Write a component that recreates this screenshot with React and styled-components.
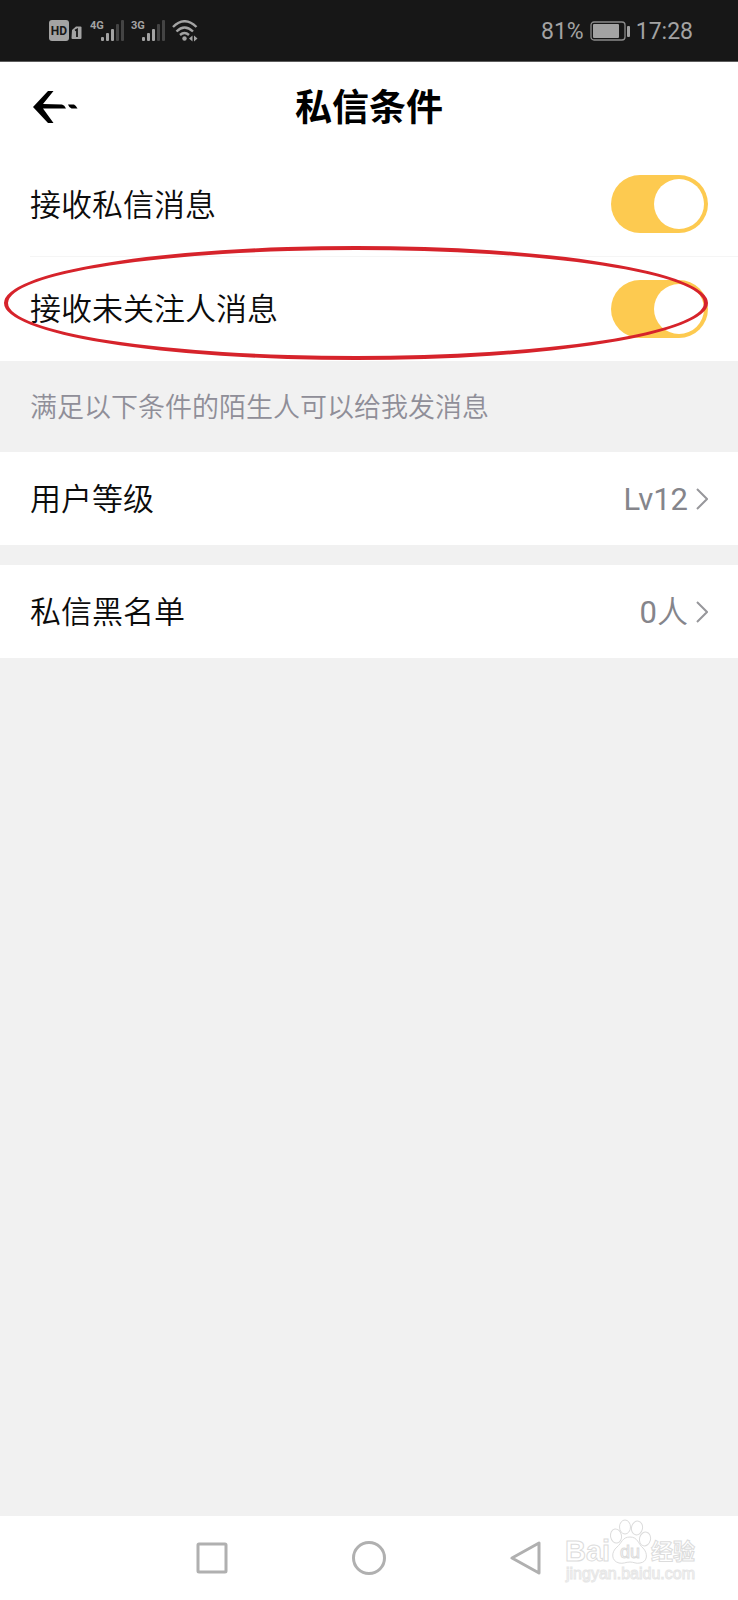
import { useState } from 'react';
import styled, { createGlobalStyle } from 'styled-components';

const GlobalStyle = createGlobalStyle`
  * {
    box-sizing: border-box;
  }
  body {
    margin: 0;
    background: #f1f1f1;
    color: #0c0c0c;
    font-family: Roboto, 'Noto Sans CJK SC', sans-serif;
    font-weight: 350;
  }
  button {
    padding: 0;
    border: none;
    background: none;
    color: inherit;
    font: inherit;
    cursor: pointer;
  }
`;

const Page = styled.div`
  display: flex;
  flex-direction: column;
  min-height: 100vh;
`;

const StatusBar = styled.div`
  display: flex;
  align-items: center;
  justify-content: space-between;
  height: 62px;
  padding: 0 45px 0 48px;
  border-bottom: 1px solid #5c5c5c;
  background: #171717;
  color: #a3a3a3;
`;

const StatusGroup = styled.div`
  display: flex;
  align-items: center;
  gap: 6px;
  font-size: 23px;
  font-weight: 400;
  line-height: 28px;
`;

const StatusText = styled.span`
  padding-top: 2px;
`;

const Header = styled.header`
  display: grid;
  grid-template-columns: 1fr auto 1fr;
  align-items: center;
  height: 90px;
  padding: 0 30px;
  background: #fff;
`;

const BackButton = styled.button`
  display: flex;
  justify-self: start;
`;

const Title = styled.h1`
  margin: 0;
  padding-top: 4px;
  color: #000;
  font-size: 37px;
  font-weight: 700;
  line-height: 48px;
`;

const List = styled.div`
  border-bottom: 1px solid #fff;
  background: #fff;
`;

const SwitchRow = styled.label`
  position: relative;
  display: flex;
  align-items: center;
  justify-content: space-between;
  height: 104px;
  margin-left: 30px;
  padding-right: 30px;
  font-size: 31px;
  line-height: 44px;

  & + & {
    border-top: 1px solid #f5f5f5;
  }
`;

const Label = styled.span`
  padding-top: 3px;
`;

const Switch = styled.input`
  display: flex;
  align-items: center;
  width: 97px;
  height: 58px;
  margin: 0;
  padding: 4px;
  appearance: none;
  border-radius: 29px;
  background: #dcdcdc;
  cursor: pointer;

  &::before {
    content: '';
    width: 50px;
    height: 50px;
    border-radius: 50%;
    background: #fff;
  }

  &:checked {
    justify-content: flex-end;
    background: #fdca50;
  }
`;

const Highlight = styled.span`
  position: absolute;
  top: -11px;
  right: 30px;
  left: -26px;
  height: 114px;
  border: 4px solid #d6232b;
  border-radius: 50%;
  pointer-events: none;
`;

const Hint = styled.p`
  margin: 0;
  padding: 27px 30px 24px;
  color: #8f8e98;
  font-size: 27px;
  line-height: 40px;
`;

const LinkList = styled.div`
  display: flex;
  flex-direction: column;
  gap: 20px;
`;

const LinkRow = styled.button`
  display: flex;
  align-items: center;
  width: 100%;
  height: 93px;
  padding: 0 30px;
  background: #fff;
  font-size: 31px;
  line-height: 44px;
`;

const Value = styled.span`
  margin-left: auto;
  margin-right: 8px;
  padding-top: 2px;
  color: #85858b;
`;

const Digits = styled.span`
  font-weight: 400;
`;

const NavBar = styled.nav`
  position: relative;
  display: flex;
  justify-content: center;
  height: 84px;
  margin-top: auto;
  background: #fff;
`;

const NavButtons = styled.div`
  display: grid;
  grid-template-columns: repeat(3, 1fr);
  width: 64%;
`;

const NavButton = styled.button`
  display: flex;
  align-items: center;
  justify-content: center;
`;

const Watermark = styled.svg`
  position: absolute;
  top: 0;
  right: 32px;
  pointer-events: none;
`;

const HdIcon = () => (
  <svg width="36" height="22" viewBox="0 0 36 22" fill="#a3a3a3">
    <rect x="1" y="0" width="20" height="21" rx="3" />
    <text x="11" y="15" textAnchor="middle" fill="#171717" fontFamily="Roboto, sans-serif" fontSize="12" fontWeight="700">HD</text>
    <path d="M24 10l4-3.500h4.500q1 0 1 1v10.500q0 1-1 1h-8q-1 0-1-1z" />
    <path d="M27 10.500l2-1v7.500" fill="none" stroke="#171717" strokeWidth="1.800" />
  </svg>
);

const SignalIcon = ({ network }) => (
  <svg width="35" height="22" viewBox="0 0 35 22" fill="#a3a3a3">
    <text x="0" y="9" fontFamily="Roboto, sans-serif" fontSize="11" fontWeight="700">{network}</text>
    <rect x="11" y="17" width="3" height="4" rx="1" />
    <rect x="16" y="13" width="3" height="8" rx="1" />
    <rect x="21" y="9" width="3" height="12" rx="1" />
    <rect x="26" y="4" width="3" height="17" rx="1" fill="#444" />
    <rect x="31" y="0" width="3" height="21" rx="1" fill="#444" />
  </svg>
);

const WifiIcon = () => (
  <svg width="26" height="22" viewBox="0 0 26 22" fill="none" stroke="#a3a3a3" strokeWidth="2.400">
    <path d="M1 7q11.500-11.500 23.500 0M4.500 11.500q8-8 16.500 0M8 15q4.500-4 9 0" />
    <circle cx="12.500" cy="18.500" r="2.200" fill="#a3a3a3" stroke="none" />
    <path d="M17 18.500l3.500-3v6zM25.500 18.500l-3.500-3v6z" fill="#a3a3a3" stroke="none" />
  </svg>
);

const BatteryIcon = () => (
  <svg width="40" height="20" viewBox="0 0 40 20">
    <rect x="1" y="1" width="34" height="18" rx="3" fill="none" stroke="#8c8c8c" strokeWidth="1.300" />
    <rect x="3" y="3" width="26" height="14" rx="1" fill="#a3a3a3" />
    <rect x="37" y="5" width="3" height="11" rx="1" fill="#a3a3a3" />
  </svg>
);

const BackIcon = () => (
  <svg width="48" height="34" viewBox="0 0 48 34">
    <path d="M18 1h5.500L13 14l19 .5q2.500.5 4 4H13L23.500 33H18L3 17z" fill="#000" />
    <path d="M38 14.500h6q2 1 3.500 4h-6q-2.500-1-3.500-4z" fill="#000" />
  </svg>
);

const ChevronIcon = () => (
  <svg width="12" height="22" viewBox="0 0 12 22" fill="none" stroke="#97979b" strokeWidth="2">
    <path d="M1 1l10 10L1 21" />
  </svg>
);

const NavIcon = ({ children }) => (
  <svg width="34" height="34" viewBox="0 0 34 34" fill="none" stroke="#b0b0b0" strokeWidth="3" strokeLinejoin="round">
    {children}
  </svg>
);

const BaiduWatermark = () => (
  <Watermark width="142" height="84" viewBox="0 0 142 84" fill="#fff" stroke="#dcdcdc" strokeWidth="1">
    <text x="1" y="45" fontFamily="Liberation Sans, sans-serif" fontSize="29" fontWeight="700">Bai</text>
    <text x="87" y="43" fontFamily="Noto Sans CJK SC, sans-serif" fontSize="22" fontWeight="700">经验</text>
    <ellipse cx="52" cy="20" rx="5.500" ry="7" transform="rotate(-10 52 20)" />
    <ellipse cx="61" cy="11" rx="5.500" ry="7" />
    <ellipse cx="73" cy="12" rx="5.500" ry="7" transform="rotate(12 73 12)" />
    <ellipse cx="81" cy="23" rx="5.500" ry="7" transform="rotate(14 81 23)" />
    <path d="M66 21c8 0 8 7 13 11 5 5 5 14-3 15-4 1-6-1-10-1s-7 2-11 1c-8-2-8-11-2-16 5-4 5-10 13-10z" />
    <text x="66" y="42" textAnchor="middle" fontFamily="Liberation Sans, sans-serif" fontSize="18">du</text>
    <text x="2" y="63" stroke="#e6e6e6" fontFamily="Liberation Sans, sans-serif" fontSize="16">jingyan.baidu.com</text>
  </Watermark>
);

const App = () => {
  const [receive, setReceive] = useState(true);
  const [receiveStrangers, setReceiveStrangers] = useState(true);

  return (
    <Page>
      <GlobalStyle />
      <StatusBar>
        <StatusGroup>
          <HdIcon />
          <SignalIcon network="4G" />
          <SignalIcon network="3G" />
          <WifiIcon />
        </StatusGroup>
        <StatusGroup>
          <StatusText>81%</StatusText>
          <BatteryIcon />
          <StatusText>17:28</StatusText>
        </StatusGroup>
      </StatusBar>
      <Header>
        <BackButton aria-label="返回">
          <BackIcon />
        </BackButton>
        <Title>私信条件</Title>
      </Header>
      <List>
        <SwitchRow>
          <Label>接收私信消息</Label>
          <Switch
            type="checkbox"
            checked={receive}
            onChange={() => setReceive(!receive)}
          />
        </SwitchRow>
        <SwitchRow>
          <Label>接收未关注人消息</Label>
          <Switch
            type="checkbox"
            checked={receiveStrangers}
            onChange={() => setReceiveStrangers(!receiveStrangers)}
          />
          <Highlight />
        </SwitchRow>
      </List>
      <Hint>满足以下条件的陌生人可以给我发消息</Hint>
      <LinkList>
        <LinkRow>
          <Label>用户等级</Label>
          <Value>
            <Digits>Lv12</Digits>
          </Value>
          <ChevronIcon />
        </LinkRow>
        <LinkRow>
          <Label>私信黑名单</Label>
          <Value>
            <Digits>0</Digits>人
          </Value>
          <ChevronIcon />
        </LinkRow>
      </LinkList>
      <NavBar>
        <NavButtons>
          <NavButton aria-label="最近任务">
            <NavIcon>
              <rect x="3" y="3" width="28" height="28" rx="1" />
            </NavIcon>
          </NavButton>
          <NavButton aria-label="主屏幕">
            <NavIcon>
              <circle cx="17" cy="17" r="15.500" />
            </NavIcon>
          </NavButton>
          <NavButton aria-label="返回上一级">
            <NavIcon>
              <path d="M30 2v30L3 17z" />
            </NavIcon>
          </NavButton>
        </NavButtons>
        <BaiduWatermark />
      </NavBar>
    </Page>
  );
};

export default App;
